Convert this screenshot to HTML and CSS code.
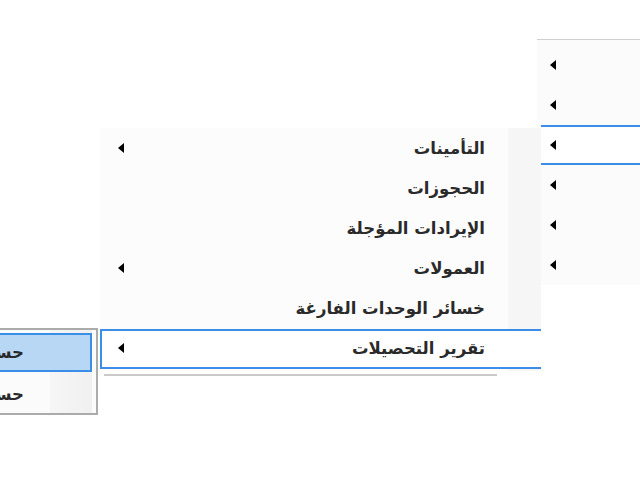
FILE: index.html
```html
<!DOCTYPE html>
<html lang="ar" dir="rtl">
    <head>
        <meta charset="UTF-8" />
        <title>قائمة التقارير</title>
        <link rel="stylesheet" href="styles.css">
    </head>
    <body>
        <div class="menu menu-top">
            <div class="item"><span class="arrow"><svg width="6" height="10" viewBox="0 0 6 10"><path d="M6 0 L0 5 L6 10 Z" /></svg></span></div>
            <div class="item"><span class="arrow"><svg width="6" height="10" viewBox="0 0 6 10"><path d="M6 0 L0 5 L6 10 Z" /></svg></span></div>
            <div class="item active"><span class="arrow"><svg width="6" height="10" viewBox="0 0 6 10"><path d="M6 0 L0 5 L6 10 Z" /></svg></span></div>
            <div class="item"><span class="arrow"><svg width="6" height="10" viewBox="0 0 6 10"><path d="M6 0 L0 5 L6 10 Z" /></svg></span></div>
            <div class="item"><span class="arrow"><svg width="6" height="10" viewBox="0 0 6 10"><path d="M6 0 L0 5 L6 10 Z" /></svg></span></div>
            <div class="item"><span class="arrow"><svg width="6" height="10" viewBox="0 0 6 10"><path d="M6 0 L0 5 L6 10 Z" /></svg></span></div>
        </div>

        <div class="menu menu-main">
            <div class="item">
                <span class="label">التأمينات</span>
                <span class="arrow"><svg width="6" height="10" viewBox="0 0 6 10"><path d="M6 0 L0 5 L6 10 Z" /></svg></span>
            </div>
            <div class="item">
                <span class="label">الحجوزات</span>
            </div>
            <div class="item">
                <span class="label">الإيرادات المؤجلة</span>
            </div>
            <div class="item">
                <span class="label">العمولات</span>
                <span class="arrow"><svg width="6" height="10" viewBox="0 0 6 10"><path d="M6 0 L0 5 L6 10 Z" /></svg></span>
            </div>
            <div class="item">
                <span class="label">خسائر الوحدات الفارغة</span>
            </div>
            <div class="item active">
                <span class="label">تقرير التحصيلات</span>
                <span class="arrow"><svg width="6" height="10" viewBox="0 0 6 10"><path d="M6 0 L0 5 L6 10 Z" /></svg></span>
            </div>
        </div>

        <div class="menu menu-sub">
            <div class="item active"><span class="label">حسابات العملاء</span></div>
            <div class="item"><span class="label">حسابات الموردين</span></div>
        </div>
    </body>
</html>
```

FILE: styles.css
```css
html,
body {
    margin: 0;
    height: 100%;
    overflow: hidden;
}
body {
    background: #fff;
    font-family: "DejaVu Sans", Tahoma, sans-serif;
    font-size: 16.5px;
    font-weight: bold;
    color: #2a2a2a;
}
.menu {
    position: absolute;
    box-sizing: border-box;
}
.item {
    display: flex;
    align-items: center;
    box-sizing: border-box;
    height: 40px;
    white-space: nowrap;
}
.arrow {
    display: flex;
    fill: #000;
}

/* first level, mostly off screen */
.menu-top {
    top: 39px;
    left: 537px;
    width: 103px;
    padding-top: 5px;
    background: #fbfbfb;
    border-top: 1px solid #cfcfcf;
}
.menu-top .item {
    justify-content: flex-end;
    padding-left: 13px;
}
.menu-top .item.active {
    background: #fff;
    border-top: 2px solid #3a8ee6;
    border-bottom: 2px solid #3a8ee6;
    margin-left: 4px;
    padding-left: 9px;
}

/* second level */
.menu-main {
    top: 128px;
    left: 100px;
    width: 441px;
    padding: 1px 0 2px;
    background: linear-gradient(to left, #f6f6f6 33px, #fcfcfc 33px);
}
.menu-main::after {
    content: "";
    position: absolute;
    left: 4px;
    bottom: -5px;
    width: 393px;
    height: 2px;
    background: #cbcbcb;
}
.menu-main .item {
    padding: 0 56px 2px 18px;
}
.menu-main .label {
    flex: 1;
}
.menu-main .item.active {
    background: #fff;
    border: 2px solid #3a8ee6;
    border-right: none;
    padding-left: 16px;
}

/* third level, cut by the left edge */
.menu-sub {
    top: 328px;
    left: 0;
    width: 98px;
    height: 87px;
    overflow: hidden;
    padding: 3px 4px 0 0;
    border: 2px solid #ababab;
    border-left: none;
    background: linear-gradient(to left, #fbfbfb 4px, #f0f0f0 4px, #f6f6f6 46px, #fbfbfb 46px);
}
.menu-sub .item {
    padding-right: 68px;
}
.menu-sub .item.active {
    height: 39px;
    margin-bottom: 2px;
    background: #b7d7f4;
    border: 2px solid #3a8ee6;
    border-left: none;
    padding-right: 66px;
}
```
